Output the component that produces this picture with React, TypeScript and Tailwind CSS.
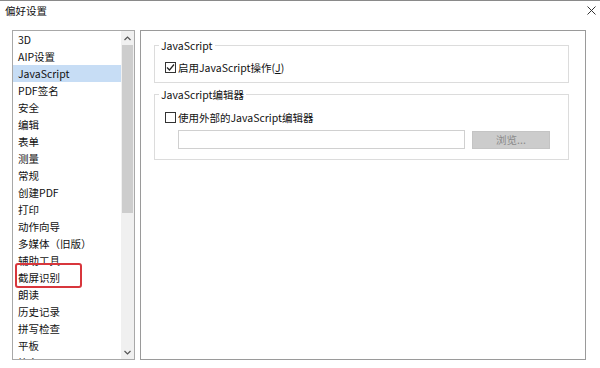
const items = [
  "3D",
  "AIP设置",
  "JavaScript",
  "PDF签名",
  "安全",
  "编辑",
  "表单",
  "测量",
  "常规",
  "创建PDF",
  "打印",
  "动作向导",
  "多媒体（旧版）",
  "辅助工具",
  "截屏识别",
  "朗读",
  "历史记录",
  "拼写检查",
  "平板",
  "签名",
];

const Checkbox = ({ checked }: { checked?: boolean }) => (
  <span className="w-[11px] h-[11px] border border-[#333] bg-white flex items-center justify-center shrink-0">
    {checked && (
      <svg width="9" height="9" viewBox="0 0 9 9">
        <polyline points="1,4.5 3.5,7 8,1.5" fill="none" stroke="#222" strokeWidth="1.2" />
      </svg>
    )}
  </span>
);

const App = () => {
  return (
    <div
      className="w-[600px] h-[368px] bg-white border-t border-[#8a8a8a] relative overflow-hidden text-[10.5px] text-[#111]"
      style={{ fontFamily: '"Noto Sans CJK SC", "Noto Sans", sans-serif' }}
    >
      {/* Title bar */}
      <div className="h-[29px] flex justify-between items-start pl-[5px] pr-[4px]">
        <span className="leading-[17px] pt-[1px]">偏好设置</span>
        <svg width="9" height="9" viewBox="0 0 9 9" className="mt-[5px]">
          <path d="M0.5 0.5 L8.5 8.5 M8.5 0.5 L0.5 8.5" stroke="#333" strokeWidth="1" />
        </svg>
      </div>

      <div className="flex pl-[12px] gap-[5px]">
        {/* Category list */}
        <div className="w-[123px] h-[330px] border border-[#a8a8a8] flex">
          <div className="flex-1 overflow-hidden">
            {items.map((item) => (
              <div
                key={item}
                className={
                  "h-[17px] leading-[17px] pl-[5px] whitespace-nowrap " +
                  (item === "JavaScript" ? "bg-[#c7ddf5]" : "")
                }
              >
                {item}
              </div>
            ))}
          </div>
          <div className="w-[13px] bg-[#f0f0f0] flex flex-col">
            <div className="h-[14px] flex items-center justify-center">
              <svg width="7" height="5" viewBox="0 0 7 5">
                <polyline points="0.5,4 3.5,1 6.5,4" fill="none" stroke="#555" strokeWidth="1.2" />
              </svg>
            </div>
            <div className="h-[168px] bg-[#cdcdcd] mx-[1px]" />
            <div className="flex-1" />
            <div className="h-[14px] flex items-center justify-center">
              <svg width="7" height="5" viewBox="0 0 7 5">
                <polyline points="0.5,1 3.5,4 6.5,1" fill="none" stroke="#555" strokeWidth="1.2" />
              </svg>
            </div>
          </div>
        </div>

        {/* Settings panel */}
        <div className="w-[446px] h-[330px] border border-[#9a9a9a] pt-[6px] pl-[13px] pr-[16px]">
          <fieldset className="border border-[#dcdcdc] pb-[6px]">
            <legend className="ml-[4px] px-[2px] leading-[17px]">JavaScript</legend>
            <div className="flex items-center h-[17px] mt-[5px] ml-[10px] gap-[2px]">
              <Checkbox checked />
              <span className="leading-[17px]">
                启用JavaScript操作(<span className="underline">J</span>)
              </span>
            </div>
          </fieldset>

          <fieldset className="border border-[#dcdcdc] pb-[10px] mt-[3px]">
            <legend className="ml-[4px] px-[2px] leading-[17px]">JavaScript编辑器</legend>
            <div className="flex items-center h-[17px] mt-[6px] ml-[10px] gap-[2px]">
              <Checkbox />
              <span className="leading-[17px]">使用外部的JavaScript编辑器</span>
            </div>
            <div className="flex items-center mt-[4px] ml-[23px]">
              <div className="w-[287px] h-[19px] border border-[#d0d0d0] bg-white" />
              <div className="ml-[7px] w-[78px] h-[18px] bg-[#cccccc] border border-[#c4c4c4] text-[#8a8a8a] flex items-center justify-center leading-[16px]">
                浏览...
              </div>
            </div>
          </fieldset>
        </div>
      </div>

      {/* Annotation box */}
      <div className="absolute left-[15px] top-[262px] w-[67px] h-[25px] border-2 border-[#d8363c] rounded-[3px]" />
    </div>
  );
};

export default App;
